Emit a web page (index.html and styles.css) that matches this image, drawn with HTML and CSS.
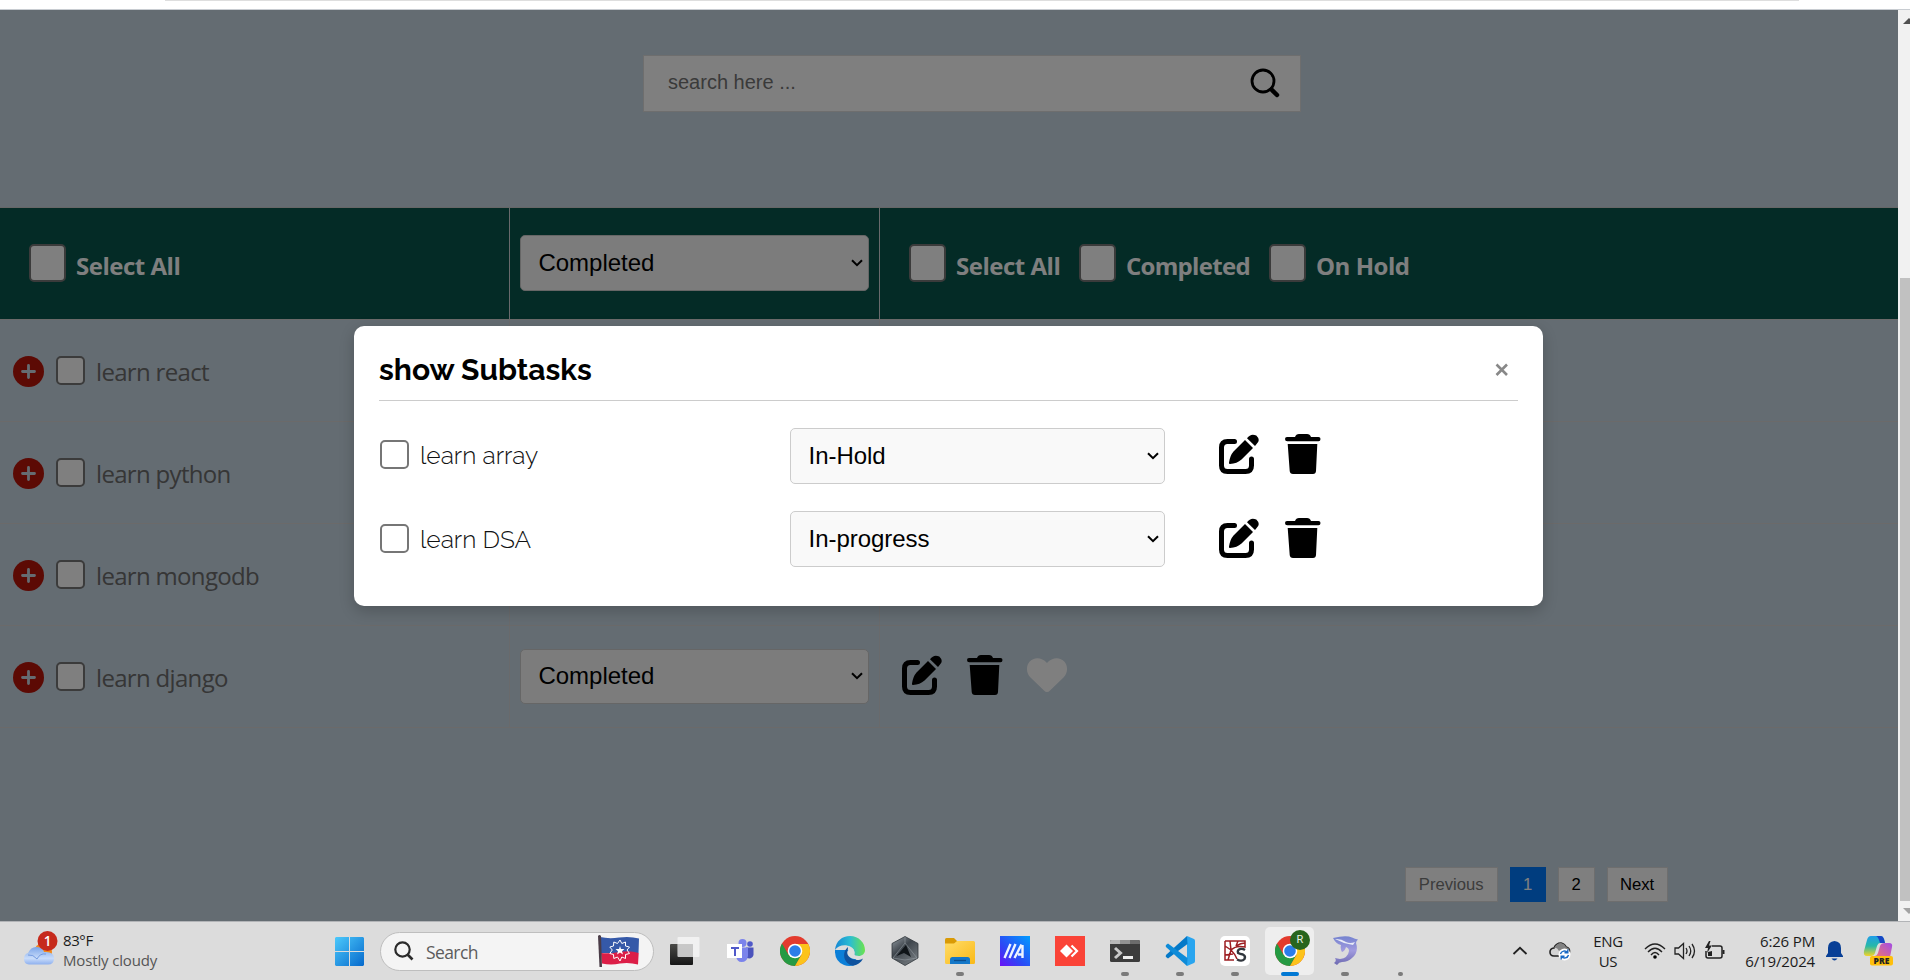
FILE: index.html
```html
<!DOCTYPE html>
<html lang="en">
<head>
<meta charset="utf-8">
<title>Tasks</title>
<link rel="stylesheet" href="styles.css">
</head>
<body>
<svg width="0" height="0" class="defs">
  <defs>
    <symbol id="edit" viewBox="0 0 40 40">
      <path d="M15.500 7.500H8.500Q2.500 7.500 2.500 13.500V31.500Q2.500 37.500 8.500 37.500H26.500Q32.500 37.500 32.500 31.500V25" fill="none" stroke="#000" stroke-width="5" stroke-linecap="round"/>
      <path d="M26 6L34 14L22.500 25.500Q18 29.500 11 30Q9.700 30 10 28.500Q11 21.500 14.500 17.500Z"/>
      <path d="M28 4.200Q32-1.200 37.300 1.600Q41.800 6 38 9.500L36 12Z"/>
    </symbol>
    <symbol id="trash" viewBox="0 0 36 40">
      <path d="M2 3H10Q11 0 14 0H22Q25 0 26 3H33.500Q35.500 3 35.500 5Q35.500 7.300 33.500 7.300H2.300Q0 7.300 0 5Q0 3 2 3ZM2.700 10H32.300L31 37Q30.800 40 28 40H8Q5 40 4.700 37Z"/>
    </symbol>
    <symbol id="arrow" viewBox="0 0 12 8"><path d="M1 1.200L6 6.200L11 1.200" fill="none" stroke="#000" stroke-width="2"/></symbol>
    <symbol id="plus" viewBox="0 0 32 32"><circle cx="15.500" cy="15.500" r="15.500" fill="#b81409"/><path d="M15.500 9.500V21.500M9.500 15.500H21.500" stroke="#cbd8e4" stroke-width="2.800" stroke-linecap="round"/></symbol>
    <symbol id="chrome" viewBox="0 0 30 30">
      <circle cx="15" cy="15" r="15" fill="#e33b2e"/>
      <path d="M2 7.500A15 15 0 0 0 15 30L21.500 18.700L15 22L8.500 18.800Z" fill="#259a43"/>
      <path d="M15 8H28.300A15 15 0 0 1 15 30L21.500 18.700Z" fill="#fcc31b"/>
      <circle cx="15" cy="15" r="7.300" fill="#fff"/><circle cx="15" cy="15" r="5.800" fill="#2b7de9"/>
    </symbol>
  </defs>
</svg>
<div class="browser"><div class="omnibox"></div></div>
<div class="window">
  <main class="page">
    <div class="search"><span>search here ...</span>
      <svg width="30" height="30" viewBox="0 0 30 30"><circle cx="13" cy="13" r="11" fill="none" stroke="#000" stroke-width="2.800"/><path d="M21.500 21.500L27 27" stroke="#000" stroke-width="4.500" stroke-linecap="round"/></svg>
    </div>
    <div class="table">
      <div class="row head">
        <div class="cell first"><i class="box big"></i><b>Select All</b></div>
        <div class="cell mid"><div class="select">Completed<svg width="12" height="8"><use href="#arrow"/></svg></div></div>
        <div class="cell last"><i class="box big"></i><b>Select All</b><i class="box big"></i><b class="completed">Completed</b><i class="box big"></i><b class="hold">On Hold</b></div>
      </div>
      <div class="row"><div class="cell first"><svg width="32" height="32"><use href="#plus"/></svg><i class="box"></i><span>learn react</span></div><div class="cell mid"></div><div class="cell last"></div></div>
      <div class="row"><div class="cell first"><svg width="32" height="32"><use href="#plus"/></svg><i class="box"></i><span>learn python</span></div><div class="cell mid"></div><div class="cell last"></div></div>
      <div class="row"><div class="cell first"><svg width="32" height="32"><use href="#plus"/></svg><i class="box"></i><span>learn mongodb</span></div><div class="cell mid"></div><div class="cell last"></div></div>
      <div class="row"><div class="cell first"><svg width="32" height="32"><use href="#plus"/></svg><i class="box"></i><span>learn django</span></div>
        <div class="cell mid"><div class="select">Completed<svg width="12" height="8"><use href="#arrow"/></svg></div></div>
        <div class="cell last icons"><svg width="40" height="40"><use href="#edit"/></svg><svg width="36" height="40"><use href="#trash"/></svg><svg width="40" height="36" viewBox="0 0 40 36"><path d="M20 35Q18.500 35 17 33.500L3.500 20.500C-1 16 -1 9 2.500 4.800C7 0 14.500 0 20 6C25.500 0 33 0 37.500 4.800C41 9 41 16 36.500 20.500L23 33.500Q21.500 35 20 35Z" fill="#fff"/></svg></div>
      </div>
    </div>
    <div class="pages"><span class="prev">Previous</span><span class="num on">1</span><span class="num">2</span><span class="next">Next</span></div>
    <div class="shade"></div>
    <section class="modal">
      <header><h2>show Subtasks</h2><svg width="14" height="14" viewBox="0 0 14 14"><path d="M1.500 1.500L12 12M12 1.500L1.500 12" stroke="#888" stroke-width="2.600"/></svg></header>
      <div class="sub"><i class="box"></i><span class="name">learn array</span><div class="select">In-Hold<svg width="12" height="8"><use href="#arrow"/></svg></div><svg class="e" width="40" height="40"><use href="#edit"/></svg><svg width="36" height="40"><use href="#trash"/></svg></div>
      <div class="sub second"><i class="box"></i><span class="name">learn DSA</span><div class="select">In-progress<svg width="12" height="8"><use href="#arrow"/></svg></div><svg class="e" width="40" height="40"><use href="#edit"/></svg><svg width="36" height="40"><use href="#trash"/></svg></div>
    </section>
  </main>
  <aside class="scroll"><svg width="12" height="20" viewBox="0 0 12 20"><path d="M5 14L11 8L17 14Z" fill="#505050"/></svg><div class="thumb"></div><svg width="12" height="20" viewBox="0 0 12 20"><path d="M5 7H17L11 13Z" fill="#a3a3a3"/></svg></aside>
</div>
<footer class="taskbar">
  <div class="weather">
    <svg width="38" height="40" viewBox="0 0 38 40">
      <defs><linearGradient id="cl" x2="0" y2="1"><stop stop-color="#7ba4e8"/><stop offset=".65" stop-color="#c9dcfa"/><stop offset="1" stop-color="#8eb0ee"/></linearGradient></defs>
      <circle cx="23" cy="21" r="9" fill="#f28a1c"/><path d="M9 33.500Q4 33 4 28Q4 23 8 22Q11 15.500 17 16Q23 16.500 24 21Q34 20 34 27.500Q34 33.500 28 33.500Z" fill="url(#cl)"/><path d="M8 24Q13 23 17 28Q20 22 26 23" fill="none" stroke="#749be0"/>
      <circle cx="27.500" cy="10" r="10" fill="#c62a1c"/><text x="27.500" y="15" text-anchor="middle" class="badge">1</text>
    </svg>
    <p><span class="deg">83°F</span><span class="mc">Mostly cloudy</span></p>
  </div>
  <svg class="win" width="29" height="29" viewBox="0 0 29 29"><defs><linearGradient id="wg" x2="1" y2="1"><stop stop-color="#4cc9fb"/><stop offset="1" stop-color="#0669cc"/></linearGradient></defs><path d="M1 0H14V14H0V1ZM15 0H28L29 1V14H15ZM0 15H14V29H1L0 28ZM15 15H29V28L28 29H15Z" fill="url(#wg)"/></svg>
  <div class="pill">
    <svg width="20" height="20" viewBox="0 0 20 20"><circle cx="8.500" cy="8.500" r="7.200" fill="none" stroke="#2a2a2a" stroke-width="2.200"/><path d="M13.500 13.500L18.500 18.500" stroke="#2a2a2a" stroke-width="2.600"/></svg>
    <span>Search</span>
    <svg class="flag" width="43" height="33" viewBox="0 0 43 33"><path d="M3 2Q12 4 22 2.500Q33 1 42 3.500L41.500 18H4Z" fill="#3559a8"/><path d="M4 18Q13 19 22 17Q33 15 41.700 18L41 29.500Q32 27 23 28.500Q14 30.500 5 28.500Z" fill="#dc1e47"/><path d="M23 5L24.800 8.500L28.500 7L28.500 11L32.500 12L30 15L32.500 18.500L28.500 19.500L28.500 23.500L24.800 22L23 26L20.500 22L16.800 23.500L16.500 19.500L12.800 18.500L15.300 15L12.800 12L16.500 11L16.800 7L20.500 8.500Z" fill="none" stroke="#fff" stroke-width="1"/><path d="M23 11L24 14H27.500L25 16.200L26 19.500L23 17.500L20 19.500L21 16.200L18.500 14H22Z" fill="#fff"/><path d="M1 1Q2.500-1 4 1L5 32H2.500Z" fill="#4a3c47"/></svg>
  </div>
  <div class="apps">
    <div><svg viewBox="0 0 30 30"><defs><linearGradient id="tv" x2="0" y2="1"><stop stop-color="#4b4b48"/><stop offset="1" stop-color="#161616"/></linearGradient></defs><rect y="8" width="23" height="21" rx="1" fill="url(#tv)"/><rect x="7.500" y="1" width="22" height="20" rx="1" fill="#f4f4f4" fill-opacity=".88"/><path d="M8 8H23V21H8Z" fill="#a8a8a8" fill-opacity=".4"/></svg></div>
    <div><svg viewBox="0 0 30 30"><circle cx="17.500" cy="7" r="4" fill="#7b83eb"/><circle cx="25" cy="8" r="2.800" fill="#5059c9"/><path d="M21 11.500H28.500V19Q27 23.500 22 22Z" fill="#4b53bc"/><path d="M11 11.500H23V20Q22 26 16.500 26Q12 26 11 20Z" fill="#7b83eb"/><rect x="2" y="8" width="15" height="14" fill="#fff"/><path d="M6 12H14M10 12V20" stroke="#5059c9" stroke-width="2"/></svg></div>
    <div><svg><use href="#chrome"/></svg></div>
    <div><svg viewBox="0 0 30 30"><defs><linearGradient id="eg" x1="0" y1=".3" x2="1" y2=".3"><stop stop-color="#1687d4"/><stop offset=".5" stop-color="#2bbdd2"/><stop offset="1" stop-color="#6be34e"/></linearGradient></defs><path d="M0 14Q-.5 25 9 29Q14 31 20 29L22 14Z" fill="#0b7fd8"/><path d="M0 14C1 5 7 0 15 0C24 0 30 7 30 14C30 19 25 21 21 19.500C18 18.500 20 17 19.500 15C17 8 4 7 0 14Z" fill="url(#eg)"/><path d="M13 11C6 17 9 28 18 29.700C22 29 26 27 28 22.500C22 26 13 23 12.500 17Z" fill="#0f539f"/><path d="M14.500 13C11 15 11.500 20 17 22.500C22 24 27 22.500 29 20.500C26 21 21 20.500 19.500 18.500C20 17 20 15 18.500 13.500C17.500 12.500 16 12 14.500 13Z" fill="#dedede"/></svg></div>
    <div><svg viewBox="0 0 30 30"><defs><linearGradient id="hg" x2=".7" y2="1"><stop stop-color="#98a0a7"/><stop offset=".45" stop-color="#3f464d"/><stop offset="1" stop-color="#73797e"/></linearGradient></defs><path d="M15 .5L28 7.500V22L15 29.500L2 22V7.500Z" fill="url(#hg)" stroke="#30363b" stroke-width=".8"/><path d="M15 1V7L3 22M15 7L27 22M3 22L15 24L27 22" stroke="#9da5ab" stroke-width=".5" fill="none"/><path d="M16 9L21 21L14 17L6.500 20Z" fill="#0f1418"/></svg></div>
    <div><svg viewBox="0 0 30 30"><defs><linearGradient id="fg" x2="1" y2="1"><stop stop-color="#ffdc68"/><stop offset="1" stop-color="#fab916"/></linearGradient></defs><path d="M0 3.500Q0 2 1.500 2H9L12 5V9H0Z" fill="#d99a06"/><path d="M0 7.500H9L12 5H28.500Q30 5 30 6.500V26.500Q30 28 28.500 28H1.500Q0 28 0 26.500Z" fill="url(#fg)"/><path d="M5 28V23.500Q5 21 7.500 21H22.500Q25 21 25 23.500V28Z" fill="#1477c8"/><path d="M9 24.500H21" stroke="#0b4d8c" stroke-width="1.300"/></svg><i></i></div>
    <div><svg viewBox="0 0 30 30"><defs><linearGradient id="ag" x1="0" y1="1" x2="1" y2="0"><stop stop-color="#6a10f6"/><stop offset=".4" stop-color="#2c49f5"/><stop offset="1" stop-color="#009dff"/></linearGradient></defs><path d="M0 0H30V30H0Z" fill="url(#ag)"/><path d="M4.500 22L10.500 8M9.500 22L15.500 8M14.500 22L21.500 8.500M22.500 9V22M18 18.500H22" fill="none" stroke="#eef4ff" stroke-width="2.400"/></svg></div>
    <div><svg viewBox="0 0 30 30"><path d="M0 0H30V30H0Z" fill="#fa4337"/><path d="M11.500 8.500L18 15L11.500 21.500L5 15Z" fill="#fff"/><path d="M16.500 9.500L22 15L16.500 20.500" fill="none" stroke="#fff" stroke-width="2.200"/></svg></div>
    <div><svg viewBox="0 0 30 30"><rect y="4" width="30" height="22" rx="1.500" fill="#3c3c3c"/><path d="M0 8V5.500Q0 4 1.500 4H10V8Z" fill="#b8b8b8"/><path d="M10 4H20V8H10Z" fill="#929292"/><path d="M20 4H28.500Q30 4 30 5.500V8H20Z" fill="#6c6c6c"/><path d="M5 12L10.500 17L5 22" fill="none" stroke="#c9c9c9" stroke-width="3"/><path d="M13 21.500H23" stroke="#eee" stroke-width="3"/></svg><i></i></div>
    <div><svg viewBox="0 0 30 30"><path d="M22 0L29 3Q30 3.500 30 5V25Q30 26.500 29 27L22 30Z" fill="#29a5ef"/><path d="M22 0L1.500 18.500Q0 20 1 21L3 22.500L22.500 8Z" fill="#0479c8"/><path d="M22 30L1.500 11.500Q0 10 1 9L3 7.500L22.500 22Z" fill="#0e8bd8"/></svg><i></i></div>
    <div><svg viewBox="0 0 30 30"><rect width="30" height="30" rx="5" fill="#fff"/><path d="M5 5H25V11Q16 9 11 14Q15 18 17 23M5 5V24H14M5 10L11 14L8 24M10 5L11 14M18 5L16 10M16 10Q21 7 25 7M5 19L13 18" fill="none" stroke="#9d1e22" stroke-width="1.500"/><path d="M25 14Q23 12.500 20 13Q17 14 18 17Q20 18 23 18.500Q26 20 24.500 23Q22 26 17 23.500" fill="none" stroke="#30363d" stroke-width="2.300"/></svg><i></i></div>
    <div class="active"><svg><use href="#chrome"/></svg><i></i><em>R</em></div>
    <div><svg viewBox="0 0 30 30"><defs><linearGradient id="dg" x2="0" y2="1"><stop stop-color="#7583cf"/><stop offset=".5" stop-color="#a19bdf"/><stop offset="1" stop-color="#6c69b0"/></linearGradient></defs><path d="M3 2Q16-1 22 1.500Q25 3 28 3.500Q26 5 26 7Q29 16 22 22Q18 26 12 26Q9 26 7 29L4 27Q7 25 5 22L10 23Q18 22 19 15Q19 12 16 11Q15 15 12 16Q10 13 11 9Q6 8 3 2Z" fill="url(#dg)"/><path d="M5 3Q11 2.500 16 6Q20 8 25 6L23 9L14 7Z" fill="#e8ebf6"/></svg><i></i></div>
    <div class="tiny"><i></i></div>
  </div>
  <div class="tray">
    <svg class="chev" width="16" height="10" viewBox="0 0 16 10"><path d="M1.500 8L8 1.800L14.500 8" fill="none" stroke="#222" stroke-width="1.800"/></svg>
    <svg class="drive" width="22" height="20" viewBox="0 0 22 20"><path d="M5 15Q1 15 1 11Q1 7.500 5 7Q7 2 12 2Q16 3 17 6Q21 7 20.500 11Q20 15 16 15Z" fill="#d4d4d4" stroke="#222" stroke-width="1.600"/><path d="M5 7Q8 2 12 2Q16 3 17 6Q21 7 20 10L10 10Q8 6 5 7Z" fill="#828282"/><circle cx="15.500" cy="13.500" r="6" fill="#fff"/><path d="M11.500 13A4 4 0 0 1 18.500 11.500M19.500 14A4 4 0 0 1 12.500 15.500M18.800 8.500V11.800H15.500M12.200 18.500V15.200H15.500" fill="none" stroke="#1769c5" stroke-width="1.400"/></svg>
    <p class="lang"><span>ENG</span><span>US</span></p>
    <svg class="wifi" width="22" height="18" viewBox="0 0 22 18"><g fill="none" stroke="#222" stroke-width="1.400"><path d="M1 7Q11-3 21 7M4 10Q11 2.500 18 10M7 13Q11 8 15 13"/></g><circle cx="11" cy="15" r="1.800"/></svg>
    <svg class="vol" width="22" height="18" viewBox="0 0 22 18"><g fill="none" stroke="#222" stroke-width="1.300"><path d="M1 6H4.500L9.500 1.500V16.500L4.500 12H1Z"/><path d="M12 6Q14 9 12 12M15 4Q18.500 9 15 14M18 2Q23 9 18 16"/></g></svg>
    <svg class="bat" width="22" height="20" viewBox="0 0 22 20"><path d="M8 5H16Q18 5 18 7V15Q18 17 16 17H4Q2 17 2 15V10" fill="none" stroke="#222" stroke-width="1.500"/><path d="M18.500 9H20.500V13H18.500Z" fill="#222"/><path d="M4 11V15H8V10Z" fill="#222"/><path d="M5 0L1 7H4L3 12L8 4.500H5L6.500 0Z" fill="#222"/></svg>
    <p class="clock"><span>6:26 PM</span><span>6/19/2024</span></p>
    <svg class="bell" width="17" height="21" viewBox="0 0 17 21"><path d="M8.500 0Q15 .5 15 7V12L17 15V16H0V15L2 12V7Q2 .5 8.500 0ZM5.500 17.500H11.500Q8.500 21.500 5.500 17.500Z" fill="#083f96"/></svg>
    <svg class="pilot" width="30" height="30" viewBox="0 0 30 30"><defs><linearGradient id="p1" x2="0" y2="1"><stop stop-color="#1f9ee8"/><stop offset=".5" stop-color="#27b8a8"/><stop offset="1" stop-color="#f4d427"/></linearGradient><linearGradient id="p2" x1="1" y1="0" x2="0" y2="1"><stop stop-color="#a34ce6"/><stop offset="1" stop-color="#ff8055"/></linearGradient></defs><path d="M8 0H18Q20 0 21 3L22 7H17Q15 7 14 10L12 17Q11 20 8 20H4Q0 20 1 15L4 4Q5 0 8 0Z" fill="url(#p1)"/><path d="M13 0H18Q20 0 21 3L22 7H17Q15 0 13 0Z" fill="#1747c4"/><path d="M22 7H26Q30 7 29 11L27 21Q26 25 23 25H9L12 20Q14 20 15 17L17 10Q18 7 22 7Z" fill="url(#p2)"/><rect x="7" y="20" width="23" height="9.500" rx="2" fill="#ffbf0b"/><text x="18.500" y="27.800" text-anchor="middle" class="pre">PRE</text></svg>
  </div>
</footer>
</body>
</html>
```
FILE: styles.css
```css
* { box-sizing: border-box; }
body { margin: 0; width: 1910px; height: 980px; overflow: hidden; background: #fff; font-family: "Segoe UI", "Open Sans", sans-serif; display: flex; flex-direction: column; }
p { margin: 0; }
svg { display: block; flex: none; }
.defs { position: absolute; }
.browser { height: 10px; flex: none; border-bottom: 1px solid #c8ccd1; }
.omnibox { height: 1px; margin: 0 111px 0 165px; background: #dedede; }
.window { display: flex; height: 911px; flex: none; }
.page { position: relative; width: 1898px; background: #c9d8e4; padding-top: 46px; overflow: hidden; }
.shade { position: absolute; inset: 0; background: rgba(0, 0, 0, .5); }

.search { width: 658px; height: 57px; margin: -1px 0 0 643px; background: #fff; border: 1px solid #ddd; display: flex; align-items: center; justify-content: space-between; padding: 0 20px 2px 24px; font: 20px "Liberation Sans", Arial, sans-serif; color: #757575; }

.table { margin-top: 95px; border-top: 1px solid #ccc; }
.row { display: flex; height: 102px; border-bottom: 1px solid #d6d4d4; }
.row.head { height: 112px; background: #08564c; color: #fff; }
.cell { display: flex; align-items: center; }
.cell + .cell { border-left: 1px solid #d3d5d8; }
.first { width: 509px; padding: 2px 0 0 13px; }
.mid { width: 370px; padding: 0 10px 1px; }
.last { flex: 1; }
.first span { margin-left: 11px; font: 24px "Segoe UI", "Open Sans", sans-serif; letter-spacing: -.68px; color: #6c6c6c; }
.box { width: 29px; height: 29px; border: 2px solid #767676; border-radius: 5px; background: #fff; flex: none; }
.first .box { margin: 0 0 3px 11px; }
.box.big, .first .box.big { width: 37px; height: 38px; margin: 1px 0 0; border-color: #767676; }
.head .first { padding: 0 0 3px 29px; }
.head .last { padding: 0 0 3px 29px; }
.head b { margin: 7px 18px 0 10px; font-size: 24px; letter-spacing: -.48px; width: 105px; white-space: nowrap; }
.head .completed { width: 125px; letter-spacing: -.7px; }
.select { position: relative; width: 100%; height: 56px; border: 1px solid #ccc; border-radius: 5px; background: #f9f9f9; display: flex; align-items: center; justify-content: space-between; padding: 0 5px 0 17.500px; font: 24px "Liberation Sans", Arial, sans-serif; letter-spacing: -.03px; color: #000; }
.row:not(.head) .select { height: 55px; }
.icons { padding: 0 0 3px 22px; }
.icons svg + svg { margin-left: 24.500px; }

.pages { margin: 139px 0 0 1405px; display: flex; gap: 12px; font: 16.670px "Liberation Sans", Arial, sans-serif; }
.pages span { height: 35px; display: flex; align-items: center; justify-content: center; border: 1px solid #ddd; background: #fff; color: #000; }
.pages .prev { width: 92.500px; color: #797979; }
.pages .num { width: 36.500px; }
.pages .next { width: 61px; }
.pages .on { background: #007bff; border-color: #007bff; color: #fff; }

.modal { position: absolute; left: 354px; top: 316px; width: 1189px; height: 280px; border-radius: 10px; background: #fff; box-shadow: 0 5px 15px rgba(0, 0, 0, .2); padding: 0 25px; }
.modal header { height: 75px; border-bottom: 1px solid #ccc; display: flex; align-items: center; justify-content: space-between; padding: 13px 9px 0 0; }
.modal h2 { margin: 0; font: 700 30px "Raleway", Lato, sans-serif; }
.sub { display: flex; align-items: center; height: 56px; margin-top: 27px; }
.modal .box { margin: 0 0 4px 1px; }
.name { width: 381px; padding: 0 0 2px 11px; font: 300 24.500px "Raleway", Lato, sans-serif; color: #111; }
.second .name { padding-bottom: 0; }
.sub .select { width: 375px; margin-right: 54px; }
.sub > svg { margin: 0 25.500px 4px 0; }
.second .box { margin-bottom: 2px; }
.second > svg { margin-bottom: 2px; }

.scroll { width: 12px; background: #f1f1f1; display: flex; flex-direction: column; }
.thumb { margin: 248px 0 0 2px; height: 623px; background: #c1c1c1; }

.taskbar { height: 59px; flex: none; border-top: 1px solid #b2b4b7; background: #dcdcdc; display: flex; align-items: center; }
.weather { display: flex; width: 335px; padding-left: 20px; }
.weather p { display: flex; flex-direction: column; margin: -1px 0 0 5px; font-size: 15px; line-height: 20px; color: #1b1b1b; }
.weather p, .tray p { font-family: "Segoe UI", "Open Sans", sans-serif; }
.deg { letter-spacing: -.4px; }
.mc { color: #555; letter-spacing: -.15px; }
.badge { font: 600 13.500px "Open Sans", sans-serif; fill: #fff; }
.pill { margin-left: 16px; width: 274px; height: 39px; border-radius: 20px; border: 1px solid #bebebe; background: #f4f4f4; display: flex; align-items: center; padding: 0 13px; color: #5c5c5c; font-size: 17.500px; letter-spacing: -.6px; }
.pill span { margin: 1px 0 0 12px; }
.flag { margin-left: auto; }
.apps { display: flex; margin-left: 3px; width: 770px; }
.apps div { position: relative; width: 55px; height: 58px; display: flex; justify-content: center; padding-top: 14px; }
.apps div svg { width: 30px; height: 30px; position: relative; }
.apps i { position: absolute; bottom: 4px; left: 24px; width: 8px; height: 4px; border-radius: 2px; background: #7b7b7b; }
.apps .tiny i { left: 26px; width: 5px; }
.apps .active::before { content: ""; position: absolute; left: 3px; top: 5px; width: 49px; height: 48px; border-radius: 5px; background: #eee; }
.apps .active i { left: 19px; width: 18px; background: #0078d4; }
.apps em { position: absolute; left: 28px; top: 8px; width: 20px; height: 20px; border-radius: 50%; background: #28651d; color: #e8f0e6; font: 11px/20px Roboto, sans-serif; text-align: center; }
.tray { display: flex; align-items: center; margin-left: 85px; }
.tray p { display: flex; flex-direction: column; font-size: 15px; line-height: 20px; color: #1b1b1b; margin-top: -1px; letter-spacing: -.4px; }
.drive { margin-left: 21px; }
.tray .lang { width: 30px; margin: 0 0 0 22px; align-items: center; }
.wifi { margin-left: 21px; }
.vol { margin-left: 8px; }
.bat { margin-left: 8px; }
.clock { width: 78px; margin-left: 11px; align-items: flex-end; }
.tray .clock { letter-spacing: -.15px; }
.bell { margin-left: 11px; }
.pilot { margin-left: 20px; }
.pre { font: 800 8.500px "Open Sans", sans-serif; fill: #222; }
```
